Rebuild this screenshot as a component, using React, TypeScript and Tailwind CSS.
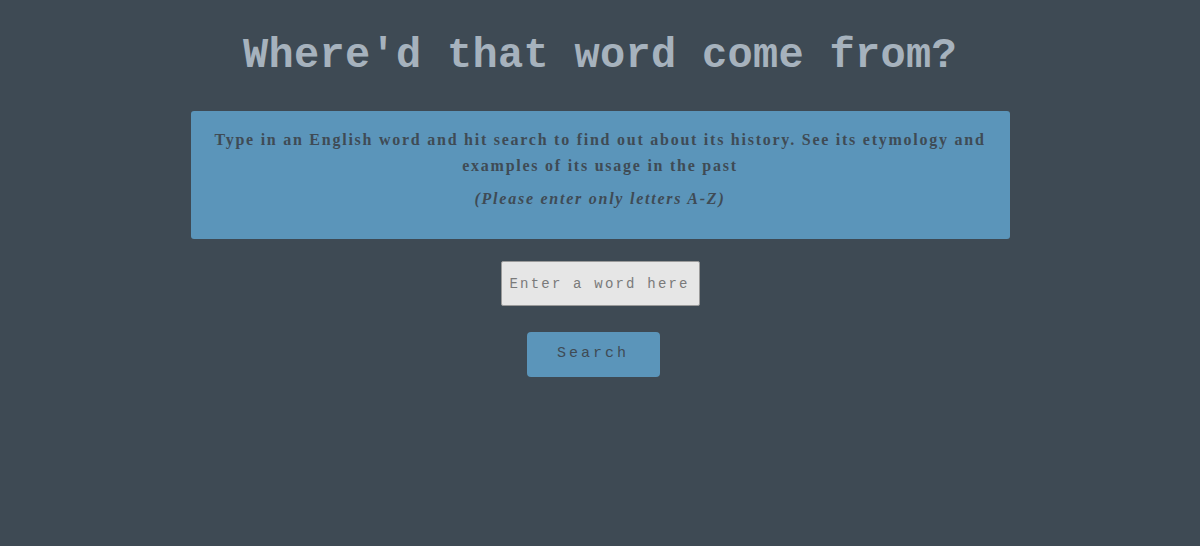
export default function App() {
  return (
    <div className="min-h-[546px] w-full bg-[#3e4a54] flex flex-col items-center pt-[33px]">
      <h1 className="font-['Liberation_Mono',monospace] font-bold text-[42px] leading-[46px] text-[#a6b2bd] tracking-[0.3px]">
        Where'd that word come from?
      </h1>

      <div className="mt-[32px] w-[819px] h-[128px] rounded-[3px] bg-[#5b95ba] flex flex-col items-center pt-[16px] text-[#3f4b55] font-['Liberation_Serif',serif] font-bold text-[16px] tracking-[1.75px]">
        <p className="text-center leading-[26px]">
          Type in an English word and hit search to find out about its history. See its etymology and
          <br />
          examples of its usage in the past
        </p>
        <p className="mt-[10px] italic leading-[20px]">(Please enter only letters A-Z)</p>
      </div>

      <input
        type="text"
        placeholder="Enter a word here"
        className="mt-[22px] w-[199px] h-[45px] bg-[#e6e6e6] border border-[#9a9a9a] rounded-[2px] px-[8px] text-[14px] font-['Liberation_Mono',monospace] tracking-[2.2px] text-[#555] placeholder:text-[#7a7a7a] outline-none"
      />

      <button className="mt-[26px] mr-[14px] w-[133px] h-[45px] bg-[#5b95ba] rounded-[4px] font-['Liberation_Mono',monospace] text-[15px] tracking-[3px] text-[#3f4b55]">
        Search
      </button>
    </div>
  );
}
